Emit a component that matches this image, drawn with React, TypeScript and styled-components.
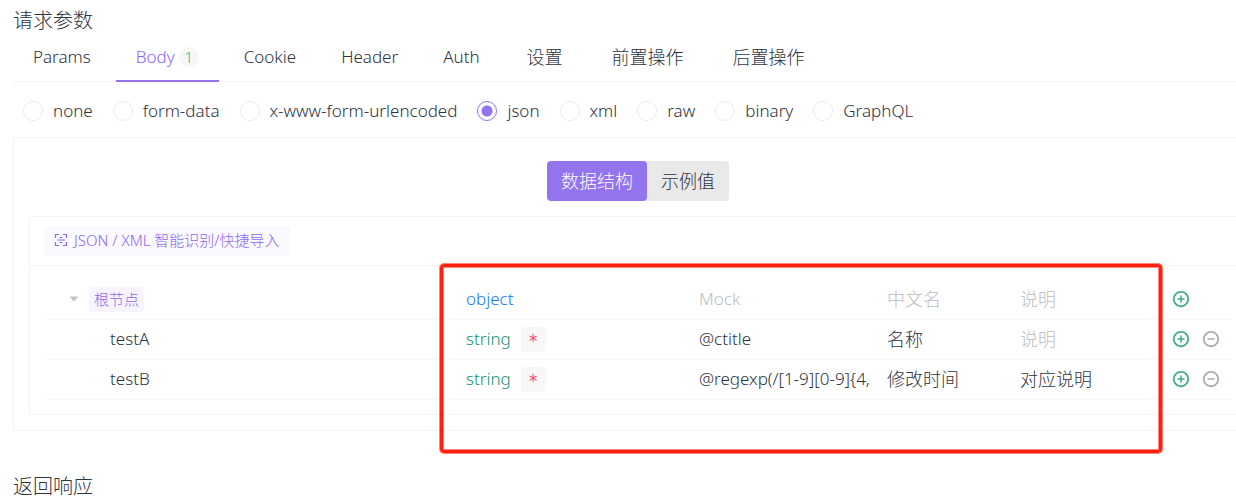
import React, { useState } from "react";
import styled, { createGlobalStyle } from "styled-components";
import { AiFillCaretDown, AiOutlineMinusCircle, AiOutlinePlusCircle } from "react-icons/ai";

const GlobalStyle = createGlobalStyle`
  * { box-sizing: border-box; }
  body {
    margin: 0;
    background: #fff;
    color: #2e3340;
    font-family: "Noto Sans", "Noto Sans CJK SC", sans-serif;
    font-size: 17px;
    font-weight: 300;
    line-height: 24px;
  }
  button, input { font: inherit; color: inherit; }
`;

const Page = styled.main`
  padding: 6px 0 0 13px;
  overflow: hidden;
`;

const SectionTitle = styled.h2`
  margin: 0;
  font-size: 20px;
  font-weight: 300;
  line-height: 30px;
`;

const TabBar = styled.nav`
  display: flex;
  gap: 5px;
  height: 46px;
  border-bottom: 1px solid #f3f3f3;
`;

const Tab = styled.button<{ $active: boolean; $cjk: boolean }>`
  display: flex;
  align-items: center;
  gap: 4px;
  height: 46px;
  padding: 0 ${(p) => (p.$cjk ? 22 : 20)}px 2px;
  border: 0;
  border-bottom: 2px solid ${(p) => (p.$active ? "#9373ee" : "transparent")};
  background: none;
  color: ${(p) => (p.$active ? "#8a68ee" : "inherit")};
  font-size: ${(p) => (p.$cjk ? 18 : 17)}px;
  white-space: nowrap;
`;

const Count = styled.span`
  width: 20px;
  height: 20px;
  border-radius: 50%;
  background: #f7f7f7;
  color: #1cbc93;
  font-size: 15px;
  line-height: 20px;
  text-align: center;
`;

const BodyTypes = styled.div`
  display: flex;
  gap: 20px;
  padding: 17px 10px 14px;
`;

const RadioLabel = styled.label`
  display: flex;
  align-items: center;
  gap: 10px;
  white-space: nowrap;
`;

const Radio = styled.input`
  appearance: none;
  width: 20px;
  height: 20px;
  margin: 0;
  border: 1px solid #ebebeb;
  border-radius: 50%;
  background: #fff;

  &:checked {
    border-color: #9373ee;
    background: radial-gradient(circle, #9373ee 5px, #fff 6px);
  }
`;

const Panel = styled.section`
  margin-right: -27px;
  padding: 23px 15px 15px;
  border: 1px solid #f3f3f3;
`;

const Segmented = styled.div`
  display: flex;
  justify-content: center;
  margin-bottom: 15px;
`;

const Segment = styled.button<{ $active: boolean }>`
  height: 40px;
  padding: 0 14px;
  border: 0;
  background: ${(p) => (p.$active ? "#9373ee" : "#e9e9e9")};
  color: ${(p) => (p.$active ? "#fff" : "inherit")};
  font-size: 18px;

  &:first-child { border-radius: 4px; box-shadow: 4px 0 0 #e9e9e9; position: relative; }
  &:last-child { border-radius: 0 4px 4px 0; }
`;

const Schema = styled.div`
  position: relative;
  border: 1px solid #f3f3f3;
  border-radius: 4px 4px 0 0;
`;

const SchemaBar = styled.div`
  padding: 9px 14px;
  border-bottom: 1px solid #f3f3f3;
`;

const ImportButton = styled.button`
  display: flex;
  align-items: center;
  gap: 6px;
  height: 30px;
  padding: 0 10px 2px;
  border: 0;
  border-radius: 4px;
  background: #faf9ff;
  color: #8a68ee;
  font-size: 15px;
`;

const TableWrap = styled.div`
  padding: 14px;
`;

const Table = styled.table`
  width: 100%;
  table-layout: fixed;
  border-collapse: separate;
  border-spacing: 0;
`;

const Col = styled.col<{ $width?: number }>`
  width: ${(p) => (p.$width ? `${p.$width}px` : "auto")};
`;

const Cell = styled.td`
  height: 40px;
  padding: 0 0 1px;
  border-bottom: 1px solid #f8f8f8;
`;

const Line = styled.div<{ $indent?: number; $gap?: number }>`
  display: flex;
  align-items: center;
  gap: ${(p) => p.$gap ?? 10}px;
  padding-left: ${(p) => p.$indent ?? 0}px;
`;

const Toggle = styled.button`
  display: flex;
  padding: 0;
  border: 0;
  background: none;
  color: #c4c4c8;
`;

const RootTag = styled.span`
  height: 25px;
  padding: 0 5px;
  border-radius: 4px;
  background: #f7f4fe;
  color: #8a68ee;
  font-size: 15px;
  line-height: 25px;
`;

const TypeName = styled.span<{ $kind: string }>`
  color: ${(p) => (p.$kind === "object" ? "#0f78f5" : "#12946b")};
`;

const Required = styled.button`
  width: 25px;
  height: 25px;
  padding: 4px 0 0;
  border: 0;
  border-radius: 4px;
  background: #f7f7f7;
  color: #f7477c;
  font-family: "DejaVu Sans Mono", monospace;
  line-height: 21px;
`;

const Field = styled.input<{ $cjk?: boolean }>`
  display: block;
  width: calc(100% - 15px);
  height: 24px;
  padding: 0;
  border: 0;
  outline: 0;
  background: none;
  font-size: ${(p) => (p.$cjk ? 18 : 17)}px;

  &::placeholder { color: #bbbcc1; opacity: 1; }
`;

const IconButton = styled.button<{ $tone: "add" | "remove" }>`
  display: flex;
  padding: 0;
  border: 0;
  background: none;
  color: ${(p) => (p.$tone === "add" ? "#26a27b" : "#9fa0a8")};
  font-size: 18px;

  svg { stroke: currentColor; stroke-width: 16px; }
`;

const Highlight = styled.div`
  position: absolute;
  top: 47px;
  right: 84px;
  width: 722px;
  height: 189px;
  border: 3px solid #ff2010;
  border-radius: 4px;
  box-shadow: 0 0 0 1px #ff20108c, inset 0 0 0 1px #ff20108c;
  pointer-events: none;
`;

const ResponseTitle = styled(SectionTitle)`
  margin-top: 41px;
`;

function ScanIcon() {
  return (
    <svg width="14" height="14" viewBox="0 0 14 14" fill="none" stroke="currentColor" aria-hidden="true">
      <path d="M1.500 5V1.500H5M9 1.500h3.500V5M12.500 9v3.500H9M5 12.500H1.500V9" strokeWidth="1.200" />
      <path d="M3 7h8M5.500 4.500h3M5.500 9.500h3" />
    </svg>
  );
}

const tabs = [
  { label: "Params", cjk: false },
  { label: "Body", cjk: false, count: 1 },
  { label: "Cookie", cjk: false },
  { label: "Header", cjk: false },
  { label: "Auth", cjk: false },
  { label: "设置", cjk: true },
  { label: "前置操作", cjk: true },
  { label: "后置操作", cjk: true },
];
const bodyTypes = ["none", "form-data", "x-www-form-urlencoded", "json", "xml", "raw", "binary", "GraphQL"];
const views = ["数据结构", "示例值"];
const rows = [
  { name: "根节点", type: "object", root: true, mock: "", title: "", note: "" },
  { name: "testA", type: "string", root: false, mock: "@ctitle", title: "名称", note: "" },
  { name: "testB", type: "string", root: false, mock: "@regexp(/[1-9][0-9]{4,", title: "修改时间", note: "对应说明" },
];

export default function App() {
  const [tab, setTab] = useState("Body");
  const [bodyType, setBodyType] = useState("json");
  const [view, setView] = useState("数据结构");

  return (
    <Page>
      <GlobalStyle />
      <SectionTitle>请求参数</SectionTitle>
      <TabBar>
        {tabs.map((t) => (
          <Tab key={t.label} $active={t.label === tab} $cjk={t.cjk} onClick={() => setTab(t.label)}>
            {t.label}
            {t.count && <Count>{t.count}</Count>}
          </Tab>
        ))}
      </TabBar>
      <BodyTypes>
        {bodyTypes.map((t) => (
          <RadioLabel key={t}>
            <Radio type="radio" name="body-type" checked={t === bodyType} onChange={() => setBodyType(t)} />
            {t}
          </RadioLabel>
        ))}
      </BodyTypes>
      <Panel>
        <Segmented>
          {views.map((v) => (
            <Segment key={v} $active={v === view} onClick={() => setView(v)}>
              {v}
            </Segment>
          ))}
        </Segmented>
        <Schema>
          <SchemaBar>
            <ImportButton>
              <ScanIcon />
              JSON / XML 智能识别/快捷导入
            </ImportButton>
          </SchemaBar>
          <TableWrap>
            <Table>
              <colgroup>
                <Col />
                <Col $width={233} />
                <Col $width={188} />
                <Col $width={133} />
                <Col $width={152} />
                <Col $width={60} />
              </colgroup>
              <tbody>
                {rows.map((r) => (
                  <tr key={r.name}>
                    <Cell>
                      {r.root ? (
                        <Line $indent={24} $gap={9}>
                          <Toggle aria-label="折叠">
                            <AiFillCaretDown size={12} />
                          </Toggle>
                          <RootTag>{r.name}</RootTag>
                        </Line>
                      ) : (
                        <Line $indent={66}>{r.name}</Line>
                      )}
                    </Cell>
                    <Cell>
                      <Line>
                        <TypeName $kind={r.type}>{r.type}</TypeName>
                        {!r.root && <Required>*</Required>}
                      </Line>
                    </Cell>
                    <Cell>
                      <Field aria-label="Mock" placeholder="Mock" defaultValue={r.mock} />
                    </Cell>
                    <Cell>
                      <Field $cjk aria-label="中文名" placeholder="中文名" defaultValue={r.title} />
                    </Cell>
                    <Cell>
                      <Field $cjk aria-label="说明" placeholder="说明" defaultValue={r.note} />
                    </Cell>
                    <Cell>
                      <Line $gap={12}>
                        <IconButton $tone="add" aria-label="添加">
                          <AiOutlinePlusCircle />
                        </IconButton>
                        {!r.root && (
                          <IconButton $tone="remove" aria-label="删除">
                            <AiOutlineMinusCircle />
                          </IconButton>
                        )}
                      </Line>
                    </Cell>
                  </tr>
                ))}
              </tbody>
            </Table>
          </TableWrap>
          <Highlight />
        </Schema>
      </Panel>
      <ResponseTitle>返回响应</ResponseTitle>
    </Page>
  );
}
